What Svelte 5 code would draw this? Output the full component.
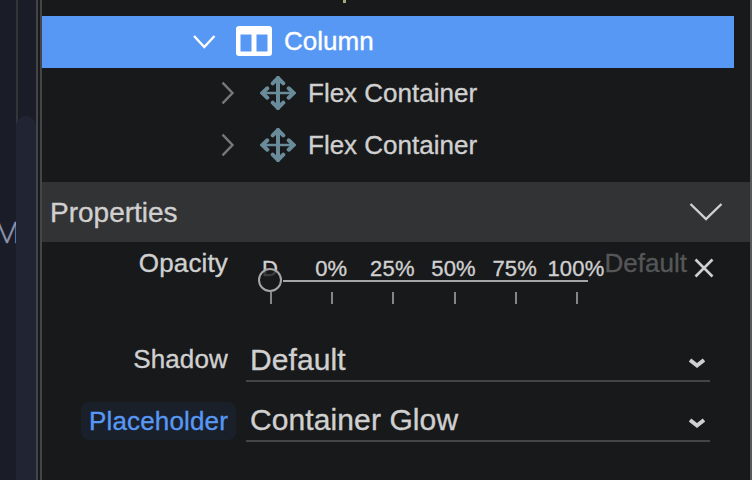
<script lang="ts">
	let containers = ['Flex Container', 'Flex Container'];
	let stops = ['D', '0%', '25%', '50%', '75%', '100%'];
	let fields = [
		{ label: 'Shadow', value: 'Default', active: false },
		{ label: 'Placeholder', value: 'Container Glow', active: true }
	];
</script>

<div class="editor">
	<div class="canvas-edge">
		<span class="canvas-text">M</span>
	</div>
	<div class="scrollbar"><div class="thumb"></div></div>
	<div class="splitter"></div>

	<main class="panel">
		<div class="tree">
			<div class="previous"><i></i></div>
			<div class="row selected">
				<svg class="toggle" width="24" height="16" viewBox="0 0 24 16">
					<path d="M2 2 L12.3 13 L22.5 2" />
				</svg>
				<svg class="column-icon" width="36" height="30" viewBox="0 0 36 30">
					<path
						fill-rule="evenodd"
						d="M3 0H33Q36 0 36 3V27Q36 30 33 30H3Q0 30 0 27V3Q0 0 3 0ZM4.5 8.5V25.5H15.5V8.5ZM20.5 8.5V25.5H31.5V8.5Z"
					/>
				</svg>
				<span>Column</span>
			</div>
			{#each containers as name}
				<div class="row child">
					<svg class="toggle" width="16" height="24" viewBox="0 0 16 24">
						<path d="M2.5 1.7 L12.5 12 L2.5 22.3" />
					</svg>
					<svg class="move-icon" width="36" height="34" viewBox="0 0 36 34">
						<path d="M18 2V32" />
						<path class="thin" d="M2 17H34" />
						<path
							d="M12.7 7.3L18 2L23.3 7.3M12.7 26.7L18 32L23.3 26.7M7.3 12.3L2.3 17L7.3 21.7M28.7 12.3L33.7 17L28.7 21.7"
						/>
					</svg>
					<span>{name}</span>
				</div>
			{/each}
		</div>

		<header class="section">
			<span>Properties</span>
			<svg width="34" height="20" viewBox="0 0 34 20">
				<path d="M1.5 2 L17 17 L32.5 2" />
			</svg>
		</header>

		<div class="opacity">
			<span class="label">Opacity</span>
			<div class="slider">
				<div class="stops">
					{#each stops as stop}
						<span>{stop}</span>
					{/each}
				</div>
				<div class="track"></div>
				<div class="ticks">
					{#each stops as _}
						<i></i>
					{/each}
				</div>
				<div class="knob"></div>
			</div>
			<span class="unset">Default</span>
			<svg class="clear" width="20" height="20" viewBox="0 0 20 20">
				<path d="M1.5 1.5L18.5 18.5M18.5 1.5L1.5 18.5" />
			</svg>
		</div>

		{#each fields as field}
			<div class="field">
				<div class="name">
					<span class="label" class:active={field.active}>{field.label}</span>
				</div>
				<div class="select">
					<span>{field.value}</span>
					<svg width="16" height="12" viewBox="0 0 16 12">
						<path d="M1 2 L8 7.5 L15 2" />
					</svg>
				</div>
			</div>
		{/each}
	</main>
</div>

<style>
	:global(body) {
		background: #18191a;
	}

	.editor {
		display: flex;
		width: 752px;
		height: 480px;
		overflow: hidden;
		background: #18191a;
		color: #d0d0d0;
		font-family: 'Liberation Sans', Arial, sans-serif;
		font-size: 26px;
		white-space: nowrap;
		-webkit-text-stroke: 0.35px currentColor;
	}

	svg {
		display: block;
		flex: none;
		fill: none;
		stroke: #d0d0d0;
		stroke-width: 2.4;
	}

	.canvas-edge {
		flex: none;
		display: flex;
		justify-content: flex-end;
		box-sizing: border-box;
		width: 16px;
		padding-top: 216px;
		overflow: hidden;
		background: #1a1c27;
	}

	.canvas-text {
		margin-right: -4px;
		color: #8e94ad;
		font-family: Roboto, sans-serif;
		font-size: 30px;
		font-weight: 300;
		line-height: 34px;
	}

	.scrollbar {
		flex: none;
		box-sizing: border-box;
		width: 20px;
		padding-top: 116px;
		background: linear-gradient(to right, #333436 2px, #1a1c27 2px);
	}

	.thumb {
		height: 400px;
		border-radius: 10px;
		background: #212433;
	}

	.splitter {
		flex: none;
		width: 2px;
		border: solid #444547;
		border-width: 0 2px;
	}

	.panel {
		flex: none;
		width: 708px;
		border-right: 2px solid #58595b;
	}

	.tree {
		height: 182px;
	}

	.previous {
		height: 16px;
		padding-left: 301px;
	}

	.previous i {
		display: block;
		width: 3px;
		height: 3px;
		background: #a2aa78;
	}

	.row {
		display: flex;
		align-items: center;
		box-sizing: border-box;
		height: 52px;
		line-height: 50px;
	}

	.row span {
		padding-bottom: 2px;
	}

	.selected {
		width: 692px;
		padding-left: 150px;
		background: #5798f5;
		color: #fff;
	}

	.selected .toggle {
		margin: 0 20px 1px 0;
		stroke: #fff;
	}

	.column-icon {
		margin: 0 12px 2px 0;
		fill: #fff;
		stroke: none;
	}

	.child {
		padding-left: 178px;
	}

	.child .toggle {
		margin: 0 24px 2px 0;
		stroke: #77787a;
	}

	.move-icon {
		margin: 0 12px 2px 0;
		stroke: #6a8b9a;
		stroke-width: 4;
		stroke-linecap: round;
	}

	.thin {
		stroke-width: 2.6;
	}

	.section {
		display: flex;
		align-items: center;
		justify-content: space-between;
		height: 60px;
		padding: 0 27px 0 8px;
		background: #323335;
		font-size: 28px;
	}

	.section span {
		padding-top: 2px;
	}

	.opacity {
		display: flex;
		height: 88px;
	}

	.label {
		flex: none;
		box-sizing: border-box;
		letter-spacing: 0.15px;
		text-align: right;
	}

	.opacity .label {
		width: 186px;
		padding-top: 5px;
		line-height: 32px;
	}

	.slider {
		position: relative;
		width: 367px;
		margin-left: 11.5px;
		padding-top: 13px;
	}

	.stops,
	.ticks {
		display: grid;
		grid-template-columns: repeat(6, 1fr);
		justify-items: center;
	}

	.stops {
		height: 25px;
		font-size: 22px;
		letter-spacing: 0.2px;
		line-height: 28px;
	}

	.track {
		height: 2px;
		margin: 0 19px 10px 43px;
		background: #a5a6a7;
	}

	.ticks {
		margin: 0 -1px 0 1px;
	}

	.ticks i {
		width: 2px;
		height: 12px;
		background: #858687;
	}

	.knob {
		position: absolute;
		top: 26px;
		left: 18.5px;
		box-sizing: border-box;
		width: 24px;
		height: 24px;
		border: 2px solid #a5a6a7;
		border-radius: 50%;
		background: rgba(24, 25, 26, 0.8);
	}

	.unset {
		margin-left: -2px;
		padding-top: 5px;
		color: #555658;
		line-height: 32px;
	}

	.clear {
		margin: 16px 0 0 7px;
		stroke-width: 2.6;
	}

	.field {
		display: flex;
		align-items: flex-start;
		gap: 10px;
		height: 60px;
	}

	.name {
		display: flex;
		justify-content: flex-end;
		width: 194px;
	}

	.field .label {
		margin: 10px 8px 0 0;
		line-height: 38px;
	}

	.field .active {
		margin: 12px 0 0;
		padding: 0 8px;
		border-radius: 8px;
		background: #1a2029;
		color: #5798f5;
	}

	.select {
		display: flex;
		align-items: center;
		justify-content: space-between;
		box-sizing: border-box;
		width: 464px;
		height: 52px;
		padding: 9px 5px 0 4px;
		border-bottom: 2px solid #444547;
		font-size: 30px;
		line-height: 42px;
	}

	.select span {
		letter-spacing: 0.1px;
	}

	.select svg {
		margin-top: 8px;
		stroke-width: 4;
	}
</style>
